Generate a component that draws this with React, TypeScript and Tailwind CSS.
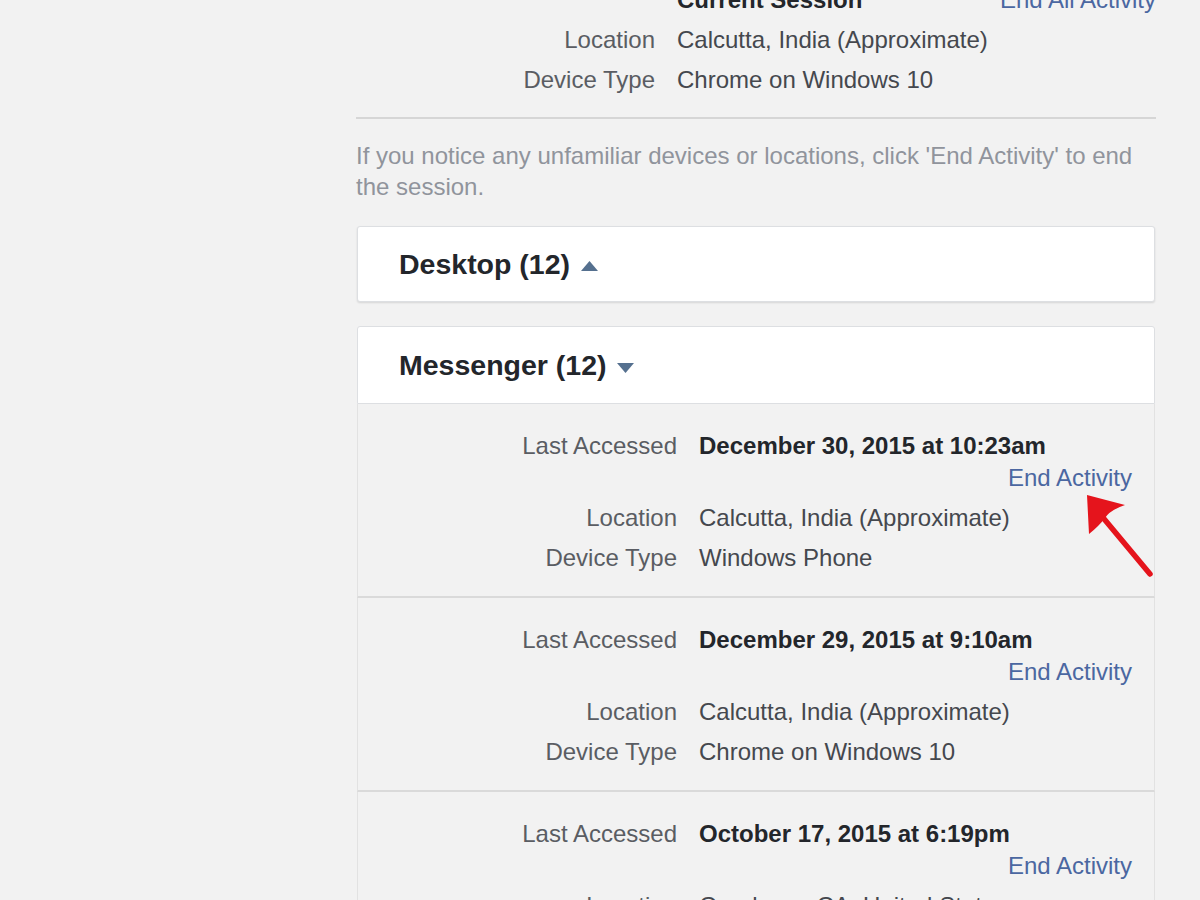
import React from 'react';

type Session = {
  accessed: string;
  location: string;
  device: string;
};

const sessions: Session[] = [
  { accessed: 'December 30, 2015 at 10:23am', location: 'Calcutta, India (Approximate)', device: 'Windows Phone' },
  { accessed: 'December 29, 2015 at 9:10am', location: 'Calcutta, India (Approximate)', device: 'Chrome on Windows 10' },
  { accessed: 'October 17, 2015 at 6:19pm', location: 'Goodyear, CA, United States', device: 'Chrome on Windows 10' },
];

function TopRow({ label, children }: { label: string; children: React.ReactNode }) {
  return (
    <div className="flex h-[40px] items-center">
      <div className="w-[299px] text-right text-[#5a5d63]">{label}</div>
      <div className="ml-[22px] flex flex-1 items-center text-[#45484e]">{children}</div>
    </div>
  );
}

function SessionRow({ info }: { info: Session }) {
  return (
    <div className="border-x border-b-2 border-x-[#e2e2e2] border-b-[#dadada] pt-[26px] pb-[18px] pr-[22px]">
      <div className="flex h-[32px] items-center">
        <div className="w-[319px] text-right text-[#5a5d63]">Last Accessed</div>
        <div className="ml-[22px] font-bold text-[#23262b]">{info.accessed}</div>
      </div>
      <div className="flex h-[32px] items-center justify-end text-[#4b67a1]">End Activity</div>
      <div className="mt-[4px] flex h-[40px] items-center">
        <div className="w-[319px] text-right text-[#5a5d63]">Location</div>
        <div className="ml-[22px] text-[#45484e]">{info.location}</div>
      </div>
      <div className="flex h-[40px] items-center">
        <div className="w-[319px] text-right text-[#5a5d63]">Device Type</div>
        <div className="ml-[22px] text-[#45484e]">{info.device}</div>
      </div>
    </div>
  );
}

export default function App() {
  return (
    <div className="relative h-[900px] overflow-hidden bg-[#f2f2f2] font-['Liberation_Sans',Arial,sans-serif] text-[24px]">
      <div className="ml-[356px] mt-[-20px] w-[800px]">
        <TopRow label="">
          <span className="font-bold text-[#23262b]">Current Session</span>
          <span className="ml-auto text-[#4b67a1]">End All Activity</span>
        </TopRow>
        <TopRow label="Location">Calcutta, India (Approximate)</TopRow>
        <TopRow label="Device Type">Chrome on Windows 10</TopRow>

        <div className="mt-[17px] h-[2px] bg-[#d6d6d6]" />

        <p className="mt-[21px] leading-[31px] text-[#90949c]">
          If you notice any unfamiliar devices or locations, click 'End Activity' to end the session.
        </p>

        <div className="mx-[1px] mt-[24px] flex h-[76px] items-center rounded-[3px] border border-[#dddfe2] bg-white pl-[41px] shadow-[0_1px_2px_rgba(0,0,0,0.12)]">
          <span className="text-[28.5px] font-bold text-[#23262b]">Desktop (12)</span>
          <svg width="17" height="10" viewBox="0 0 17 10" className="ml-[11px] mt-[4px]">
            <path d="M0 10 L8.5 0 L17 10 Z" fill="#55708f" />
          </svg>
        </div>

        <div className="mx-[1px] mt-[24px] flex h-[78px] items-center rounded-t-[3px] border border-[#dddfe2] bg-white pl-[41px]">
          <span className="text-[28.5px] font-bold text-[#23262b]">Messenger (12)</span>
          <svg width="17" height="10" viewBox="0 0 17 10" className="ml-[10px] mt-[6px]">
            <path d="M0 0 L17 0 L8.5 10 Z" fill="#55708f" />
          </svg>
        </div>

        <div className="mx-[1px]">
          {sessions.map((s, i) => (
            <SessionRow key={i} info={s} />
          ))}
        </div>
      </div>

      <svg
        className="absolute left-[1080px] top-[490px]"
        width="80"
        height="95"
        viewBox="0 0 80 95"
      >
        <path d="M70 84 L20 24" stroke="#e5141c" strokeWidth="5.5" strokeLinecap="round" />
        <path d="M7 5 L45 15 Q30 20 25 28 Q19 36 9 44 Z" fill="#e5141c" />
      </svg>
    </div>
  );
}
